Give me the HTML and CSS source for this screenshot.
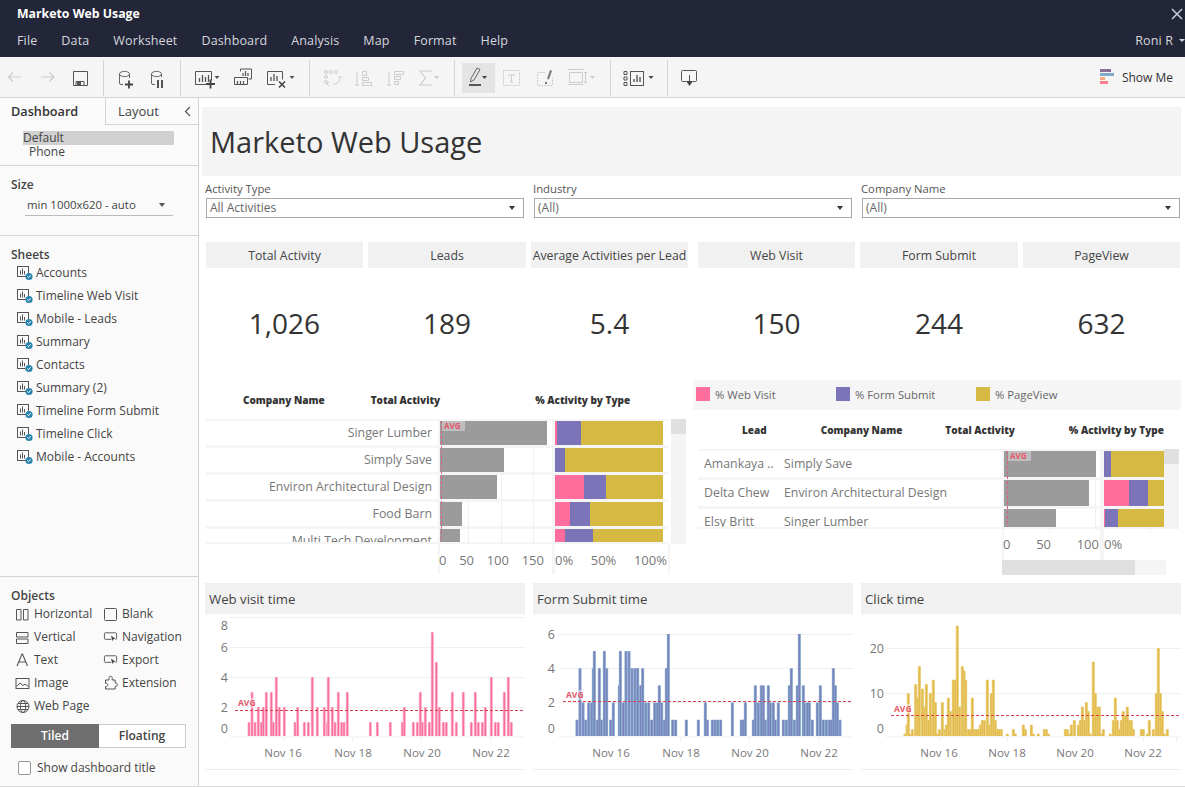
FILE: index.html
```html
<!DOCTYPE html>
<html lang="en">
<head>
<meta charset="utf-8">
<title>Marketo Web Usage</title>
<link rel="stylesheet" href="styles.css">
</head>
<body>
<svg class="defs" width="0" height="0" aria-hidden="true">
  <symbol id="sheet" viewBox="0 0 16 16">
    <rect x="0.5" y="1.5" width="11" height="10" fill="none" stroke="#555"/>
    <path d="M3.5 5.5v4M5.5 3.5v6M7.5 6v3.5" stroke="#555" fill="none"/>
    <circle cx="12" cy="11.5" r="3.6" fill="#2a84ad"/>
    <path d="M10.3 11.5l1.2 1.2 2.2-2.4" stroke="#fff" fill="none"/>
  </symbol>
  <symbol id="cursor" viewBox="0 0 16 16">
    <path d="M9 10.5H2.5a1 1 0 0 1-1-1v-5a1 1 0 0 1 1-1h11a1 1 0 0 1 1 1v5a1 1 0 0 1-1 1H13" fill="none" stroke="#555"/>
    <path d="M8.5 6.5l1.6 6 1-2 2-.8z" fill="#444"/>
  </symbol>
</svg>

<header class="titlebar">
  <div class="titlerow">
    <span class="apptitle">Marketo Web Usage</span>
    <svg class="close" width="12" height="12" viewBox="0 0 12 12"><path d="M1 1l10 10M11 1L1 11" stroke="#c9ccd3" stroke-width="1.5"/></svg>
  </div>
  <nav class="menurow">
    <span>File</span><span>Data</span><span>Worksheet</span><span>Dashboard</span><span>Analysis</span><span>Map</span><span>Format</span><span>Help</span>
    <span class="user">Roni R <i class="usercaret"></i></span>
  </nav>
</header>

<div class="toolbar">
  <svg width="103" height="40" viewBox="0 0 103 40">
    <path d="M21 20H8.500M13 15.500L8.500 20l4.500 4.500M41 20h13M49.500 15.500L54 20l-4.500 4.500" fill="none" stroke="#ccc" stroke-width="1.200"/>
    <path d="M73.500 14.500h14v14h-14z" fill="none" stroke="#555"/>
    <path d="M76 29v-4.500h8V29" fill="none" stroke="#555"/><rect x="77" y="25" width="4" height="4" fill="#555"/>
  </svg>
  <i class="sep"></i>
  <svg width="76" height="40" viewBox="104 0 76 40">
    <g fill="none" stroke="#666">
      <path d="M119.500 17v9a1.500 1.500 0 0 0 1.500 1.500h2M129.500 17v4M119.500 17c0-3.500 10-3.500 10 0s-10 3.500-10 0z"/>
      <path d="M151.500 17v9a1.500 1.500 0 0 0 1.500 1.500h2M161.500 17v3M151.500 17c0-3.500 10-3.500 10 0s-10 3.500-10 0z"/>
    </g>
    <path d="M125 27.500h8M129 23.500v8" stroke="#444" stroke-width="1.800"/>
    <path d="M158 23v8M162 23v8" stroke="#444" stroke-width="1.800"/>
  </svg>
  <i class="sep"></i>
  <svg width="128" height="40" viewBox="181 0 128 40">
    <g fill="none" stroke="#555">
      <path d="M207 27.500h-11.500v-13h16v9"/><path d="M199.500 25v-4M202.500 25v-7M205.500 25v-5M208.500 25v-7" stroke-width="1.300"/>
      <path d="M240.500 14.500v-2.500h11v10h-3M234.500 27.500v-7h13v7z"/><path d="M243 19v-3M245.500 19v-5M248 19v-3M237.500 27v-3M240.500 27v-3M243.500 27v-3" stroke-width="1.200"/>
      <path d="M275 27.500h-7.500v-13h15v8"/><path d="M271 24v-4M274 24v-7M277 24v-5" stroke-width="1.300"/>
    </g>
    <path d="M206 27h9M210.500 22.500v9" stroke="#444" stroke-width="1.800"/>
    <path d="M279 24.500l6 6M285 24.500l-6 6" stroke="#444" stroke-width="1.600"/>
    <path d="M214.500 19h5l-2.500 3zM289.500 19h5l-2.500 3z" fill="#555"/>
  </svg>
  <i class="sep"></i>
  <svg width="144" height="40" viewBox="310 0 144 40">
    <g fill="none" stroke="#ccc">
      <circle cx="326" cy="15" r="1.500"/><circle cx="331" cy="15" r="1.500"/><circle cx="336" cy="15" r="1.500"/><circle cx="326" cy="20" r="1.500"/><circle cx="326" cy="25" r="1.500"/>
      <path d="M340 21c0 4-3 6-7 6M329 29l-2-2 2-2"/><path d="M338 21l2-2 2 2"/>
      <path d="M357 15v14M355 27l2 2 2-2M362.500 14.500h4v4h-4zM362.500 20.500h6v3h-6zM362.500 25.500h9v3h-9z"/>
      <path d="M389 15v14M387 27l2 2 2-2M394.500 14.500h9v3h-9zM394.500 19.500h6v3h-6zM394.500 24.500h4v3h-4z"/>
    </g>
    <path d="M431 15v-1h-11l5.500 7-5.500 7h11v-1" fill="none" stroke="#ccc" stroke-width="1.200"/>
    <path d="M434 19h5l-2.500 3z" fill="#ccc"/>
  </svg>
  <i class="sep"></i>
  <div class="toolgroup">
    <i class="pen-hl"></i>
    <svg class="toolsvg" width="155" height="40" viewBox="455 0 155 40">
      <path d="M472 24l-1.500 1 .5-3.500 6-10.500 3 1.500-6 10.500z" fill="none" stroke="#666"/>
      <path d="M469 28h12" stroke="#555" stroke-width="2"/>
      <path d="M482 19h5l-2.500 3z" fill="#444"/>
      <g fill="none" stroke="#ccc">
        <rect x="503.500" y="13.500" width="16" height="15" stroke-dasharray="2 1"/>
        <path d="M508 18h7M511.500 18v7M510 25h3"/>
        <path d="M545 15.500h-7.500v13h15v-8" stroke-dasharray="2 1"/>
        <path d="M567.500 12.500h16M567.500 27.500h16M569.500 15.500h13v10h-13zM585.500 15.500v10M584 15.500h3M584 25.500h3"/>
      </g>
      <path d="M547 22l3-9 2 .8-3 8.500zM545 25h2v2h-2z" fill="#777"/>
      <path d="M590 19h5l-2.500 3z" fill="#ccc"/>
    </svg>
  </div>
  <i class="sep"></i>
  <svg width="56" height="40" viewBox="611 0 56 40">
    <g fill="none" stroke="#555">
      <path d="M624 14.500h3v3h-3zM624 20h3v3h-3zM624 25.500h3v3h-3z"/>
      <rect x="630.500" y="14.500" width="13" height="14"/>
      <path d="M634 25v-3M637 25v-7M640 25v-5" stroke-width="1.400"/>
    </g>
    <path d="M648.500 19h5l-2.500 3z" fill="#444"/>
  </svg>
  <i class="sep"></i>
  <svg width="40" height="40" viewBox="668 0 40 40">
    <path d="M686 24.500h-3.500a1 1 0 0 1-1-1v-9a1 1 0 0 1 1-1h13a1 1 0 0 1 1 1v9a1 1 0 0 1-1 1H693" fill="none" stroke="#555"/>
    <path d="M689.500 18v7" stroke="#555"/><path d="M686 24h7l-3.500 5z" fill="#444"/>
  </svg>
  <div class="showme">
    <svg width="15" height="16" viewBox="0 0 15 16">
      <rect width="11" height="3" fill="#8d6e97"/><rect y="4" width="14" height="3" fill="#7fa8c9"/>
      <rect y="8" width="5" height="3" fill="#f5a97f"/><rect y="12" width="8" height="3" fill="#ff7d8a"/>
    </svg>
    <span>Show Me</span>
  </div>
</div>

<div class="workspace">
  <aside class="side">
    <div class="tabs">
      <div class="tab tab-on">Dashboard</div>
      <div class="tab tab-off">Layout</div>
      <div class="tab-rest">
        <svg width="7" height="11" viewBox="0 0 7 11"><path d="M6 1L1.500 5.500 6 10" fill="none" stroke="#555" stroke-width="1.200"/></svg>
      </div>
    </div>
    <section class="devices">
      <div class="dev-on">Default</div>
      <div class="dev">Phone</div>
    </section>
    <section class="sizebox">
      <h3 class="sidehead">Size</h3>
      <div class="sizeselect"><span>min 1000x620 - auto</span><i class="caret"></i></div>
    </section>
    <section class="sheets">
      <h3 class="sidehead">Sheets</h3>
      <ul class="sheetlist">
        <li><svg width="16" height="16"><use href="#sheet"/></svg>Accounts</li>
        <li><svg width="16" height="16"><use href="#sheet"/></svg>Timeline Web Visit</li>
        <li><svg width="16" height="16"><use href="#sheet"/></svg>Mobile - Leads</li>
        <li><svg width="16" height="16"><use href="#sheet"/></svg>Summary</li>
        <li><svg width="16" height="16"><use href="#sheet"/></svg>Contacts</li>
        <li><svg width="16" height="16"><use href="#sheet"/></svg>Summary (2)</li>
        <li><svg width="16" height="16"><use href="#sheet"/></svg>Timeline Form Submit</li>
        <li><svg width="16" height="16"><use href="#sheet"/></svg>Timeline Click</li>
        <li><svg width="16" height="16"><use href="#sheet"/></svg>Mobile - Accounts</li>
      </ul>
    </section>
    <section class="objects">
      <h3 class="sidehead">Objects</h3>
      <div class="objgrid">
        <div class="obj"><svg width="15" height="16" viewBox="0 0 15 16"><path d="M1.500 3.500h4.500v10.500h-4.500zM8.500 3.500h4.500v10.500h-4.500z" fill="none" stroke="#555"/></svg>Horizontal</div>
        <div class="obj"><svg width="15" height="16" viewBox="0 0 15 16"><rect x="1.500" y="2.500" width="12" height="12" rx="1" fill="none" stroke="#555"/></svg>Blank</div>
        <div class="obj"><svg width="15" height="16" viewBox="0 0 15 16"><path d="M1.500 3.500h11.500v4.500h-11.500zM1.500 10h11.500v4.500h-11.500z" fill="none" stroke="#555"/></svg>Vertical</div>
        <div class="obj"><svg width="15" height="16"><use href="#cursor"/></svg>Navigation</div>
        <div class="obj"><svg width="15" height="16" viewBox="0 0 15 16"><path d="M2 14L7 2h.5l5 12M3.800 10h7.500" fill="none" stroke="#555" stroke-width="1.100"/></svg>Text</div>
        <div class="obj"><svg width="15" height="16"><use href="#cursor"/></svg>Export</div>
        <div class="obj"><svg width="15" height="16" viewBox="0 0 15 16"><rect x="1" y="3.500" width="13" height="10" fill="none" stroke="#555"/><path d="M1.500 11.500l3.500-3.500 3 2.500 2-1.500 3.500 2.500" fill="none" stroke="#555"/></svg>Image</div>
        <div class="obj"><svg width="15" height="16" viewBox="0 0 15 16"><path d="M6 3.500a1.700 1.700 0 1 1 3.200 0v1.500h3v3a1.700 1.700 0 1 1 0 3.200v2.800H2.500v-2.500a1.700 1.700 0 1 0 0-3.200V5H6z" fill="none" stroke="#555"/></svg>Extension</div>
        <div class="obj"><svg width="15" height="16" viewBox="0 0 15 16"><g fill="none" stroke="#555"><circle cx="8" cy="8.500" r="6"/><ellipse cx="8" cy="8.500" rx="2.700" ry="6"/><path d="M2 8.500h12M3 5.500h10M3 11.500h10"/></g></svg>Web Page</div>
      </div>
      <div class="segment"><div class="seg-on">Tiled</div><div class="seg-off">Floating</div></div>
      <label class="showtitle"><i class="checkbox"></i>Show dashboard title</label>
    </section>
  </aside>

  <main class="dash">
    <h1 class="dashtitle">Marketo Web Usage</h1>

    <div class="filters">
      <div class="filter"><div class="filterlabel">Activity Type</div><div class="filterbox"><span>All Activities</span><i class="caret caret-dark"></i></div></div>
      <div class="filter"><div class="filterlabel">Industry</div><div class="filterbox"><span>(All)</span><i class="caret caret-dark"></i></div></div>
      <div class="filter"><div class="filterlabel">Company Name</div><div class="filterbox"><span>(All)</span><i class="caret caret-dark"></i></div></div>
    </div>

    <div class="kpis">
      <div class="kpi"><div class="kpihead">Total Activity</div><div class="kpival">1,026</div></div>
      <div class="kpi"><div class="kpihead">Leads</div><div class="kpival">189</div></div>
      <div class="kpi"><div class="kpihead">Average Activities per Lead</div><div class="kpival">5.4</div></div>
      <div class="kpi kpi-break"><div class="kpihead">Web Visit</div><div class="kpival">150</div></div>
      <div class="kpi"><div class="kpihead">Form Submit</div><div class="kpival">244</div></div>
      <div class="kpi"><div class="kpihead">PageView</div><div class="kpival">632</div></div>
    </div>

    <div class="tables">
      <section class="tbl tbl-left">
        <div class="thead thead-left"><b>Company Name</b><b>Total Activity</b><b>% Activity by Type</b></div>
        <div class="tbody tbody-left">
          <div class="rows">
            <div class="row"><div class="rowlabel">Singer Lumber</div><div class="barcell"><i class="gray" style="width:107px"></i></div><div class="pctcell"><i class="pk" style="width:2px"></i><i class="pu" style="width:24px"></i><i class="ye"></i></div></div>
            <div class="row"><div class="rowlabel">Simply Save</div><div class="barcell"><i class="gray" style="width:64px"></i></div><div class="pctcell"><i class="pu" style="width:10px"></i><i class="ye"></i></div></div>
            <div class="row"><div class="rowlabel">Environ Architectural Design</div><div class="barcell"><i class="gray" style="width:57px"></i></div><div class="pctcell"><i class="pk" style="width:29px"></i><i class="pu" style="width:22px"></i><i class="ye"></i></div></div>
            <div class="row"><div class="rowlabel">Food Barn</div><div class="barcell"><i class="gray" style="width:22px"></i></div><div class="pctcell"><i class="pk" style="width:15px"></i><i class="pu" style="width:20px"></i><i class="ye"></i></div></div>
            <div class="row"><div class="rowlabel">Multi Tech Development</div><div class="barcell"><i class="gray" style="width:20px"></i></div><div class="pctcell"><i class="pk" style="width:10px"></i><i class="pu" style="width:28px"></i><i class="ye"></i></div></div>
          </div>
          <i class="avgline"></i><span class="avgbadge">AVG</span>
          <div class="vscroll"><i class="vthumb"></i></div>
        </div>
        <div class="axis axis-left">
          <div class="axiscell ax-count"><span>0</span><span>50</span><span>100</span><span>150</span></div>
          <div class="axiscell ax-pct"><span>0%</span><span>50%</span><span>100%</span></div>
        </div>
      </section>

      <section class="tbl tbl-right">
        <div class="legend">
          <div class="legitem"><i class="swatch pk"></i>% Web Visit</div>
          <div class="legitem"><i class="swatch pu"></i>% Form Submit</div>
          <div class="legitem"><i class="swatch ye"></i>% PageView</div>
        </div>
        <div class="thead thead-right"><b>Lead</b><b>Company Name</b><b>Total Activity</b><b>% Activity by Type</b></div>
        <div class="tbody tbody-right">
          <div class="rows">
            <div class="row"><div class="rowlead">Amankaya ..</div><div class="rowco">Simply Save</div><div class="barcell"><i class="gray" style="width:92px"></i></div><div class="pctcell"><i class="pu" style="width:7px"></i><i class="ye"></i></div></div>
            <div class="row"><div class="rowlead">Delta Chew</div><div class="rowco">Environ Architectural Design</div><div class="barcell"><i class="gray" style="width:85px"></i></div><div class="pctcell"><i class="pk" style="width:25px"></i><i class="pu" style="width:19px"></i><i class="ye"></i></div></div>
            <div class="row"><div class="rowlead">Elsy Britt</div><div class="rowco">Singer Lumber</div><div class="barcell"><i class="gray" style="width:52px"></i></div><div class="pctcell"><i class="pk" style="width:1px"></i><i class="pu" style="width:13px"></i><i class="ye"></i></div></div>
          </div>
          <i class="avgline"></i><span class="avgbadge">AVG</span>
          <div class="vscroll"><i class="vthumb"></i></div>
        </div>
        <div class="axis axis-right">
          <div class="axiscell ax-count"><span>0</span><span>50</span><span>100</span></div>
          <div class="axiscell ax-pct"><span>0%</span></div>
        </div>
        <div class="hscroll"><i class="hthumb"></i></div>
      </section>
    </div>

    <div class="charts">
      <section class="chart">
        <h2 class="charthead">Web visit time</h2>
        <svg class="plot" width="320" height="155" viewBox="0 0 320 155">
          <g class="grid"><path d="M25 3.500H320M25 33.500H320M25 63.500H320M25 93.500H320M25 123H320"/><path d="M78.500 123v5M147.500 123v5M216.500 123v5M285.500 123v5"/></g>
          <g class="bars" data-series="web" data-left="-5" data-base="472" data-unit="45"></g>
          <rect class="avgbg" x="32" y="84" width="17" height="10"/>
          <path class="avgdash" d="M30 96.500H320"/>
          <text class="avgtext" x="33" y="92">AVG</text>
          <g class="ylab"><text x="23" y="16">8</text><text x="23" y="38">6</text><text x="23" y="68">4</text><text x="23" y="98">2</text><text x="23" y="119">0</text></g>
          <g class="xlab"><text x="78" y="143">Nov 16</text><text x="148" y="143">Nov 18</text><text x="217" y="143">Nov 20</text><text x="286" y="143">Nov 22</text></g>
        </svg>
      </section>
      <section class="chart">
        <h2 class="charthead">Form Submit time</h2>
        <svg class="plot" width="320" height="155" viewBox="0 0 320 155">
          <g class="grid"><path d="M25 20.500H320M25 54.500H320M25 88.500H320M25 123H320"/><path d="M78.500 123v5M147.500 123v5M216.500 123v5M285.500 123v5"/></g>
          <g class="bars" data-series="form" data-left="-3" data-base="471" data-unit="51.500"></g>
          <rect class="avgbg" x="32" y="76" width="17" height="10"/>
          <path class="avgdash" d="M30 87.500H320"/>
          <text class="avgtext" x="33" y="84">AVG</text>
          <g class="ylab"><text x="22" y="25">6</text><text x="22" y="59">4</text><text x="22" y="93">2</text><text x="22" y="119">0</text></g>
          <g class="xlab"><text x="78" y="143">Nov 16</text><text x="148" y="143">Nov 18</text><text x="217" y="143">Nov 20</text><text x="286" y="143">Nov 22</text></g>
        </svg>
      </section>
      <section class="chart">
        <h2 class="charthead">Click time</h2>
        <svg class="plot" width="320" height="155" viewBox="0 0 320 155">
          <g class="grid"><path d="M25 34.500H320M25 79.500H320M25 123H320"/><path d="M78.500 123v5M146.500 123v5M214.500 123v5M282.500 123v5M315.500 123v5"/></g>
          <g class="bars" data-series="click" data-left="-6" data-base="475" data-unit="13.500"></g>
          <rect class="avgbg" x="32" y="90" width="17" height="10"/>
          <path class="avgdash" d="M30 101.500H320"/>
          <text class="avgtext" x="33" y="98">AVG</text>
          <g class="ylab"><text x="23" y="39">20</text><text x="23" y="84">10</text><text x="23" y="119">0</text></g>
          <g class="xlab"><text x="78" y="143">Nov 16</text><text x="146" y="143">Nov 18</text><text x="214" y="143">Nov 20</text><text x="282" y="143">Nov 22</text></g>
        </svg>
      </section>
    </div>
  </main>
</div>
<div class="statusline"></div>
<script src="charts.js"></script>
</body>
</html>
```
FILE: styles.css
```css
* { box-sizing: border-box; }
html, body { margin: 0; padding: 0; }
body {
  width: 1185px; height: 788px; overflow: hidden;
  font-family: "Open Sans", "Liberation Sans", sans-serif;
  font-size: 12px; color: #555; background: #fff;
}
.defs { position: absolute; }
i { display: block; font-style: normal; }

/* title bar */
.titlebar { height: 57px; background: #222638; color: #fff; padding: 0 0 0 17px; }
.titlerow { height: 27px; display: flex; align-items: center; justify-content: space-between; padding-right: 2px; }
.apptitle { font-size: 12.300px; font-weight: 700; }
.menurow { height: 27px; display: flex; align-items: center; gap: 24px; font-size: 12.500px; letter-spacing: .14px; color: #d5d7dd; }
.user { margin-left: auto; display: flex; align-items: center; gap: 6px; white-space: nowrap; margin-right: 0; }
.usercaret { border: 3px solid transparent; border-top: 3px solid #d5d7dd; border-bottom: 0; }

/* toolbar */
.toolbar { height: 41px; background: #f5f5f5; border-bottom: 1px solid #d4d4d4; display: flex; align-items: flex-start; }
.toolbar > svg, .toolsvg { display: block; flex: none; }
.sep { width: 1px; height: 36px; margin-top: 3px; background: #d4d4d4; flex: none; }
.toolgroup { position: relative; width: 155px; height: 40px; flex: none; }
.pen-hl { position: absolute; left: 7px; top: 6px; width: 33px; height: 30px; background: #e4e4e4; }
.toolsvg { position: relative; }
.showme { margin-left: auto; margin-right: 12px; height: 40px; display: flex; align-items: center; gap: 7px; color: #333; font-size: 12px; }

/* side panel */
.workspace { display: flex; height: 688px; }
.side { width: 199px; flex: none; background: #fafafa; border-right: 1px solid #d4d4d4; display: flex; flex-direction: column; color: #444; }
.tabs { display: flex; height: 27px; }
.tab { font-size: 12.700px; line-height: 26px; }
.tab-on { width: 105px; padding-left: 11px; font-weight: 600; color: #333; }
.tab-off { width: 90px; padding-left: 12px; border-left: 1px solid #d4d4d4; border-bottom: 1px solid #d4d4d4; font-size: 13px; font-weight: 500; color: #444; }
.tab-rest { flex: 1; border-bottom: 1px solid #d4d4d4; margin-left: -18px; display: flex; align-items: center; justify-content: center; height: 27px; position: relative; }
.devices { height: 41px; padding: 6px 0 0 23px; border-bottom: 1px solid #d4d4d4; line-height: 14px; color: #444; }
.dev-on { width: 151px; background: #d0d0d0; height: 14px; }
.dev { padding-left: 6px; }
.sidehead { margin: 0; font-size: 12px; font-weight: 600; color: #444; line-height: 16px; }
.sizebox { height: 70px; padding: 11px 0 0 11px; border-bottom: 1px solid #d4d4d4; }
.sizeselect { margin: 3px 0 0 14px; width: 148px; height: 20px; border-bottom: 1px solid #bbb; display: flex; align-items: center; justify-content: space-between; padding: 0 8px 2px 2px; font-size: 11.400px; margin-bottom: 0; }
.caret { width: 0; height: 0; border: 3.500px solid transparent; border-top: 4px solid #555; border-bottom: 0; }
.caret-dark { border-top-color: #333; }
.sheets { height: 341px; padding: 11px 0 0 11px; border-bottom: 1px solid #d4d4d4; }
.sheetlist { list-style: none; margin: -2px 0 0; padding: 0 0 0 6px; }
.sheetlist li { height: 23px; display: flex; align-items: center; gap: 3px; white-space: nowrap; }
.objects { padding: 11px 0 0 11px; flex: 1; }
.objgrid { display: grid; grid-template-columns: 88px 1fr; grid-auto-rows: 23px; margin: -2px 0 0 4px; }
.obj { display: flex; align-items: center; gap: 4px; white-space: nowrap; }
.segment { display: flex; width: 175px; height: 24px; margin-top: 7px; text-align: center; line-height: 22px; font-weight: 600; }
.seg-on { width: 88px; background: #6e6e6e; color: #fff; border: 1px solid #6e6e6e; }
.seg-off { flex: 1; background: #fff; border: 1px solid #ccc; border-left: 0; color: #444; }
.showtitle { display: flex; align-items: center; gap: 6px; margin: 11px 0 0 7px; white-space: nowrap; color: #444; }
.checkbox { width: 13px; height: 14px; border: 1px solid #999; border-radius: 2px; background: #fff; }
.statusline { height: 2px; background: #fff; border-top: 1px solid #ddd; }

/* dashboard */
.dash { flex: 1; padding: 9px 4px 0 3px; background: #fff; min-width: 0; }
.dashtitle { margin: 0; height: 69px; background: #f4f4f4; padding-left: 8px; font-size: 29px; font-weight: 400; line-height: 70px; color: #333; }
.filters { display: grid; grid-template-columns: repeat(3, 320px); gap: 8px; margin: 5px 0 0 3px; }
.filterlabel { height: 17px; font-size: 11.300px; line-height: 16px; color: #555; }
.filterbox { margin-left: 1px; height: 20px; width: 318px; border: 1px solid #a8a8a8; display: flex; align-items: center; justify-content: space-between; padding: 0 8px 2px 3px; font-size: 12px; color: #666; }
.filterbox .caret { margin-top: 2px; }
.kpis { display: grid; grid-template-columns: 157px 158px 157px 0 157px 158px 157px; column-gap: 5px; margin: 24px 0 0 4px; }
.kpi-break { grid-column: 5; }
.kpihead { height: 26px; background: #f1f1f1; text-align: center; font-size: 12.300px; line-height: 27px; color: #444; white-space: nowrap; overflow: hidden; }
.kpival { height: 112px; text-align: center; font-size: 28px; line-height: 110px; color: #333; }

/* tables */
.tables { display: flex; height: 203px; padding-left: 3px; }
.tbl { flex: none; width: 488px; }
.thead { display: flex; align-items: center; font-size: 10px; font-weight: 700; color: #333; white-space: nowrap; }
.thead-left { height: 39px; padding-top: 1px; padding-left: 38px; }
.thead-left b:nth-child(2) { margin-left: 46px; }
.thead-left b:nth-child(3) { margin-left: 95px; }
.thead-right { height: 39px; padding-left: 49px; }
.thead-right b:nth-child(2) { margin-left: 54px; }
.thead-right b:nth-child(3) { margin-left: 43px; }
.thead-right b:nth-child(4) { margin-left: 54px; }

.tbody { position: relative; overflow: hidden; display: flex; }
.tbody::after { content: ""; position: absolute; left: 0; bottom: 0; height: 2px; background: #f5f5f5; }
.rows { background: #f5f5f5; padding-top: 2px; overflow: hidden; display: flex; flex-direction: column; gap: 3px; }
.row { display: flex; height: 24px; flex: none; background: #fff; font-size: 12.350px; color: #777; white-space: nowrap; }
.rowlabel { text-align: right; line-height: 24px; }
.barcell { flex: none; background-color: #fff; border-left: 2px solid #f5f5f5; }
.gray { height: 100%; background: #9b9b9b; }
.pctcell { flex: none; display: flex; background: #fff; }
.pk { background: #ff6d9c; flex: none; }
.pu { background: #7b74b8; flex: none; }
.ye { background: #d6b942; flex: 1; }
.avgline { position: absolute; width: 0; top: 2px; bottom: 0; border-left: 1px dashed #e0607a; }
.avgbadge { position: absolute; top: 2px; background: rgba(255,255,255,.35); color: #e4586a; font-size: 8px; font-weight: 700; line-height: 10px; padding: 0 4px 0 2px; }
.vscroll { background: #f4f4f4; margin-left: 3px; flex: none; width: 15px; }
.vthumb { background: #e0e0e0; height: 15px; }

.tbody-left { height: 125px; margin-left: 1px; }
.tbody-left::after { width: 462px; }
.tbody-left .rows { width: 462px; }
.tbody-left .rowlabel { width: 226px; }
.tbody-left .barcell { width: 117px; margin-left: 6px; border-right: 3px solid #f5f5f5; background-image: repeating-linear-gradient(90deg, transparent 0 31.400px, #f1f1f1 31.400px 32.400px); background-position: -3px 0; }
.tbody-left .pctcell { width: 108px; }
.tbody-left .avgline { left: 235px; }
.tbody-left .avgbadge { left: 236px; }

.axis { display: flex; font-size: 13px; color: #777; height: 30px; line-height: 32px; background-repeat: no-repeat; }
.axiscell { display: flex; justify-content: space-between; height: 100%; }
.axis-left {
  padding-left: 234px;
  background-image: linear-gradient(#f5f5f5, #f5f5f5), linear-gradient(#f5f5f5, #f5f5f5), linear-gradient(#f5f5f5, #f5f5f5);
  background-position: 233px 0, 347px 0, 463px 0;
  background-size: 2px 100%, 3px 100%, 2px 100%;
}
.axis-left .ax-count { width: 105px; }
.axis-left .ax-pct { width: 111px; margin-left: 11px; }
.axis-left .ax-pct span:last-child { margin-right: -1px; }

.legend { height: 30px; background: #f5f5f5; display: flex; padding: 0 0 2px 3px; }
.legitem { width: 140px; display: flex; align-items: center; gap: 5px; font-size: 11.300px; color: #666; }
.swatch { width: 14px; height: 14px; flex: none; }
.tbody-right { height: 80px; margin-left: 5px; }
.tbody-right::after { width: 466px; }
.tbody-right .rows { width: 466px; }
.rowlead { width: 86px; padding-left: 6px; line-height: 26px; overflow: hidden; }
.rowco { width: 218px; line-height: 26px; }
.tbody-right .row { height: 26px; }
.tbody-right .barcell { width: 102px; border-right: 4px solid #f5f5f5; background-image: linear-gradient(90deg, transparent 91px, #f1f1f1 91px 92px, transparent 92px); }
.tbody-right .pctcell { width: 60px; }
.tbody-right .vscroll { margin-left: 0; }
.tbody-right .avgline { left: 309px; }
.tbody-right .avgbadge { left: 310px; }
.axis-right {
  height: 31px; line-height: 30px; padding-left: 310px;
  background-image: linear-gradient(#f5f5f5, #f5f5f5), linear-gradient(#f5f5f5, #f5f5f5), linear-gradient(#f1f1f1, #f1f1f1), linear-gradient(#f1f1f1, #f1f1f1);
  background-position: 309px 0, 407px 0, 356px 0, 457px 0;
  background-size: 2px 100%, 4px 100%, 1px 4px, 1px 4px;
}
.axis-right .ax-count { width: 96px; }
.axis-right .ax-pct { margin-left: 5px; }
.hscroll { margin: 0 0 0 309px; width: 164px; height: 15px; background: #f5f5f5; }
.hthumb { width: 133px; height: 100%; background: #e0e0e0; }

/* charts */
.charts { display: grid; grid-template-columns: repeat(3, 320px); gap: 8px; padding-left: 3px; }
.chart { border-bottom: 1px solid #eee; }
.charthead { margin: 0; height: 31px; background: #f1f1f1; padding-left: 4px; font-size: 13.200px; font-weight: 400; line-height: 33px; color: #444; }
.plot { display: block; }
.plot text { font-family: "Open Sans", "Liberation Sans", sans-serif; }
.grid path { fill: none; stroke: #f0f0f0; stroke-width: 1; }
.avgdash { fill: none; stroke: #d9404f; stroke-width: 1; stroke-dasharray: 3 2; }
.avgbg { fill: #fff; fill-opacity: .45; }
.avgtext { font-size: 8.500px; font-weight: 700; fill: #e4586a; }
.ylab text { font-size: 12.500px; fill: #777; text-anchor: end; }
.xlab text { font-size: 11.500px; fill: #777; text-anchor: middle; }
.bar-web { fill: #fbb8cf; }
.line-web { fill: #fb6d9d; }
.bar-form { fill: #7fa3c9; }
.line-form { fill: #7b74bb; fill-opacity: .85; }
.bar-click { fill: #e9ca70; }
.line-click { fill: #e0b945; }
```
FILE: charts.js
```javascript
// Hourly mark data: [x position, value], x given at 3× chart scale.
var SERIES = {
  web: [[147,1],[156,3],[165,1],[175,2],[184,1],[190,2],[199,3],[214,3],[220,1],[229,4],[238,2],[253,2],[285,1],[293,2],[313,1],[325,1],[337,4],[352,2],[373,2],[382,1],[385,4],[397,2],[405,1],[415,3],[425,1],[432,1],[442,3],[511,1],[532,1],[571,1],[607,1],[613,2],[640,1],[652,1],[661,3],[667,1],[676,2],[688,1],[697,7],[709,5],[718,2],[730,1],[739,1],[757,3],[769,1],[790,3],[814,1],[826,3],[835,1],[847,1],[856,2],[874,4],[886,1],[895,1],[913,3],[925,4],[934,1]],
  form: [[141,1],[150,4],[159,2],[167,1],[176,2],[185,2],[190,4],[193,5],[202,1],[208,4],[214,1],[223,5],[230,4],[242,1],[250,2],[268,3],[271,5],[280,2],[288,5],[297,5],[306,4],[315,4],[323,4],[332,3],[338,4],[347,2],[356,2],[365,1],[374,2],[382,2],[388,3],[395,2],[403,1],[409,4],[415,6],[428,1],[437,1],[469,1],[505,1],[526,2],[532,1],[547,1],[555,1],[563,1],[572,1],[607,2],[634,1],[640,1],[646,2],[670,1],[676,3],[685,2],[694,3],[700,3],[706,1],[715,3],[721,2],[730,2],[736,1],[745,2],[760,1],[769,1],[778,3],[784,4],[793,1],[802,3],[808,6],[820,3],[823,2],[832,2],[838,2],[847,1],[862,2],[871,3],[880,1],[889,1],[898,1],[904,1],[910,4],[916,3],[922,2],[930,1]],
  click: [[150,1],[156,3],[160,10],[165,1],[172,2],[182,12],[187,9],[193,16],[202,11],[208,7],[214,12],[220,4],[226,10],[232,4],[235,13],[241,8],[247,1],[253,2],[262,8],[270,2],[274,3],[280,9],[286,6],[295,13],[301,13],[307,25],[314,7],[322,16],[327,15],[332,13],[340,2],[346,2],[352,9],[358,2],[364,2],[370,2],[376,3],[382,4],[388,4],[397,13],[403,3],[409,10],[415,13],[421,4],[427,2],[433,2],[439,2],[457,1],[475,2],[481,1],[505,3],[511,2],[529,3],[535,1],[550,1],[568,2],[574,2],[580,1],[631,2],[637,2],[643,1],[649,3],[658,4],[670,3],[676,4],[682,7],[688,4],[694,8],[700,6],[706,1],[715,17],[721,10],[727,7],[733,7],[739,1],[745,2],[766,1],[775,4],[781,9],[787,4],[793,2],[799,4],[805,6],[811,5],[817,7],[823,4],[829,4],[835,2],[859,2],[865,2],[877,1],[883,4],[895,2],[904,10],[910,20],[916,10],[922,6],[928,1],[937,2]]
};

var NS = "http://www.w3.org/2000/svg";
var FLOOR = 122; // bottom of the plot, in svg px

function rect(parent, cls, x, y, w) {
  var r = document.createElementNS(NS, "rect");
  r.setAttribute("class", cls);
  r.setAttribute("x", x);
  r.setAttribute("y", y);
  r.setAttribute("width", w);
  r.setAttribute("height", Math.max(0, FLOOR - y));
  parent.appendChild(r);
}

document.querySelectorAll(".bars").forEach(function (g) {
  var name = g.dataset.series;
  var left = +g.dataset.left;
  var base = +g.dataset.base;
  var unit = +g.dataset.unit;
  SERIES[name].forEach(function (d) {
    var x = d[0] / 3 + left;
    var y = (base - d[1] * unit) / 3 - 34;
    rect(g, "bar-" + name, x - 1.5, y, 3);
    rect(g, "line-" + name, x - (name === "web" ? 0.75 : 0.5), y, name === "web" ? 1.5 : 1);
  });
});
```
